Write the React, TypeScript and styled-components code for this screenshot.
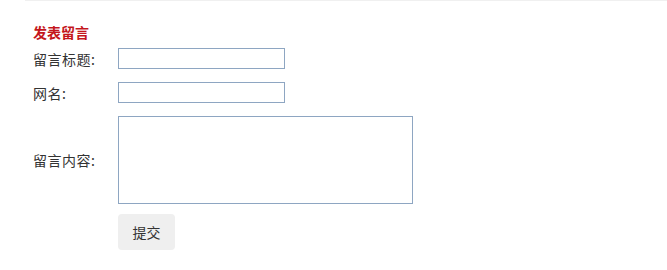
import React from "react";
import styled, { createGlobalStyle } from "styled-components";

const Global = createGlobalStyle`
  html, body { margin: 0; padding: 0; background: #fff; }
  body { font-family: "Microsoft YaHei", "Noto Sans CJK SC", "Noto Sans", sans-serif; }
`;

const Page = styled.div`
  margin-left: 25px;
  border-top: 1px solid #f0f0f0;
  padding: 21px 0 0 8px;
`;

const Heading = styled.h3`
  margin: 0 0 6px 0;
  font-size: 14px;
  line-height: 20px;
  font-weight: bold;
  color: #c4161c;
`;

const Form = styled.form`
  display: grid;
  grid-template-columns: 85px auto;
  row-gap: 13px;
  align-items: center;
  justify-items: start;
`;

const Label = styled.label`
  font-size: 14px;
  color: #333;
  line-height: 20px;
  letter-spacing: 0.5px;
`;

const TextInput = styled.input`
  box-sizing: border-box;
  width: 167px;
  height: 21px;
  margin: 0;
  border: 1px solid #8ea6c2;
  background: #fff;
  padding: 0 3px;
  outline: none;
`;

const TextArea = styled.textarea`
  box-sizing: border-box;
  width: 295px;
  height: 88px;
  margin: 0;
  border: 1px solid #8ea6c2;
  background: #fff;
  resize: none;
  outline: none;
  display: block;
`;

const Button = styled.button`
  grid-column: 2;
  margin-top: -3px;
  width: 57px;
  height: 36px;
  border: none;
  border-radius: 4px;
  background: #efefef;
  color: #333;
  font-family: inherit;
  font-size: 14px;
  padding: 0;
`;

export default function App() {
  return (
    <>
      <Global />
      <Page>
        <Heading>发表留言</Heading>
        <Form onSubmit={(e) => e.preventDefault()}>
          <Label>留言标题:</Label>
          <TextInput type="text" />
          <Label>网名:</Label>
          <TextInput type="text" />
          <Label>留言内容:</Label>
          <TextArea />
          <Button type="submit">提交</Button>
        </Form>
      </Page>
    </>
  );
}
